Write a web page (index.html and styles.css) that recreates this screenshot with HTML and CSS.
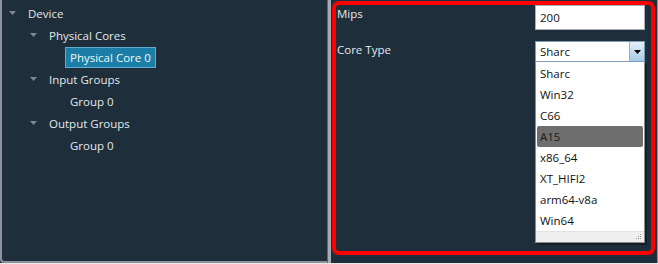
FILE: index.html
```html
<!DOCTYPE html>
<html>
<head>
    <title>Device Configuration</title>

    <link rel="stylesheet" href="styles.css">
</head>
<body>
<div class="window">
    <div class="tree-pane">
        <ul class="tree">
            <li>
                <div class="node"><span class="toggle"><svg width="7" height="4" viewBox="0 0 7 4"><polygon points="0,0 7,0 3.5,4" fill="#80878e"/></svg></span><span class="node-label">Device</span></div>
                <ul>
                    <li>
                        <div class="node"><span class="toggle"><svg width="7" height="4" viewBox="0 0 7 4"><polygon points="0,0 7,0 3.5,4" fill="#80878e"/></svg></span><span class="node-label">Physical Cores</span></div>
                        <ul>
                            <li><div class="node"><span class="toggle"></span><span class="node-label selected">Physical Core 0</span></div></li>
                        </ul>
                    </li>
                    <li>
                        <div class="node"><span class="toggle"><svg width="7" height="4" viewBox="0 0 7 4"><polygon points="0,0 7,0 3.5,4" fill="#80878e"/></svg></span><span class="node-label">Input Groups</span></div>
                        <ul>
                            <li><div class="node"><span class="toggle"></span><span class="node-label">Group 0</span></div></li>
                        </ul>
                    </li>
                    <li>
                        <div class="node"><span class="toggle"><svg width="7" height="4" viewBox="0 0 7 4"><polygon points="0,0 7,0 3.5,4" fill="#80878e"/></svg></span><span class="node-label">Output Groups</span></div>
                        <ul>
                            <li><div class="node"><span class="toggle"></span><span class="node-label">Group 0</span></div></li>
                        </ul>
                    </li>
                </ul>
            </li>
        </ul>
    </div>
    <div class="splitter"></div>
    <div class="detail-pane">
        <div class="highlight-box">
            <div class="props">
                <label class="prop-label">Mips</label>
                <input class="textbox" type="text" value="200">
                <label class="prop-label">Core Type</label>
                <div class="combo">
                    <div class="combo-field">
                        <span class="combo-value">Sharc</span>
                        <span class="combo-button"><svg width="7" height="4" viewBox="0 0 7 4"><polygon points="0,0 7,0 3.5,4" fill="#000"/></svg></span>
                    </div>
                    <div class="dropdown">
                        <div class="option">Sharc</div>
                        <div class="option">Win32</div>
                        <div class="option">C66</div>
                        <div class="option hover">A15</div>
                        <div class="option">x86_64</div>
                        <div class="option">XT_HIFI2</div>
                        <div class="option">arm64-v8a</div>
                        <div class="option">Win64</div>
                        <div class="dropdown-footer">
                            <svg width="6" height="6" viewBox="0 0 6 6"><rect x="4" y="0" width="1" height="1" fill="#9a9a9a"/><rect x="2" y="2" width="1" height="1" fill="#9a9a9a"/><rect x="4" y="2" width="1" height="1" fill="#9a9a9a"/><rect x="0" y="4" width="1" height="1" fill="#9a9a9a"/><rect x="2" y="4" width="1" height="1" fill="#9a9a9a"/><rect x="4" y="4" width="1" height="1" fill="#9a9a9a"/></svg>
                        </div>
                    </div>
                </div>
            </div>
        </div>
    </div>
</div>
</body>
</html>
```

FILE: styles.css
```css
body {
    margin: 0;
    background: #e9e9e9;
    font-family: "Open Sans", "Noto Sans", sans-serif;
    font-size: 11.5px;
}
.window {
    display: flex;
    height: 263px;
    background: #1e2e3a;
}
.tree-pane {
    box-sizing: border-box;
    width: 327px;
    height: 263px;
    border-left: 2px solid #8d9399;
    border-bottom: 2px solid #8d9399;
    border-bottom-left-radius: 4px;
    padding: 2px 0 0 7px;
}
.tree, .tree ul {
    list-style: none;
    margin: 0;
    padding: 0;
}
.tree ul {
    padding-left: 21px;
}
.node {
    display: flex;
    align-items: center;
    height: 22px;
}
.toggle {
    display: flex;
    align-items: center;
    width: 14px;
    height: 22px;
}
.node-label {
    color: #e4e9ed;
    line-height: 19px;
    padding: 0 4px;
    border: 1px solid transparent;
    white-space: nowrap;
}
.node-label.selected {
    background: #1b7ea6;
    border-color: #63acd0;
    color: #f2f6f8;
}
.splitter {
    width: 3px;
    background: #a6acb1;
    border-left: 1px solid #5f676e;
    height: 264px;
}
.detail-pane {
    flex: 1;
    padding: 1px 2px 8px 1px;
    border-right: 1px solid #8d9399;
}
.highlight-box {
    box-sizing: border-box;
    height: 100%;
    border: 4px solid #ff0000;
    border-radius: 7px;
    padding: 0 6px 0 1px;
}
.props {
    display: grid;
    grid-template-columns: 1fr 110px;
    row-gap: 11px;
    align-items: start;
}
.prop-label {
    color: #e4e9ed;
    line-height: 16px;
    padding-top: 1px;
}
.textbox {
    box-sizing: border-box;
    width: 110px;
    height: 25px;
    margin: 0;
    border: 1px solid #abadb3;
    padding: 0 4px;
    font: inherit;
    color: #111;
    background: #fff;
}
.combo {
    position: relative;
}
.combo-field {
    box-sizing: border-box;
    display: flex;
    height: 21px;
    border: 1px solid #7f9db9;
    background: #fff;
}
.combo-value {
    flex: 1;
    padding-left: 4px;
    line-height: 19px;
    color: #111;
}
.combo-button {
    display: flex;
    align-items: center;
    justify-content: center;
    width: 14px;
    background: linear-gradient(#e4f0f9, #a6cbe5);
    border-left: 1px solid #8fb2cc;
}
.dropdown {
    position: absolute;
    top: 21px;
    left: 0;
    box-sizing: border-box;
    width: 110px;
    background: #fff;
    border: 1px solid #8c8c8c;
    border-top: none;
    box-shadow: 2px 2px 0 rgba(0, 0, 0, 0.35);
    padding: 1px 1px 0 1px;
}
.option {
    height: 21px;
    line-height: 21px;
    padding-left: 3px;
    color: #111;
}
.option.hover {
    background: #6e6e6e;
    border-radius: 2px;
    color: #1a1a1a;
}
.dropdown-footer {
    display: flex;
    justify-content: flex-end;
    align-items: flex-end;
    height: 11px;
    margin: 0 -1px;
    padding: 0 2px 2px 0;
    box-sizing: border-box;
    background: #efefef;
    border-top: 1px solid #e2e2e2;
}
```
